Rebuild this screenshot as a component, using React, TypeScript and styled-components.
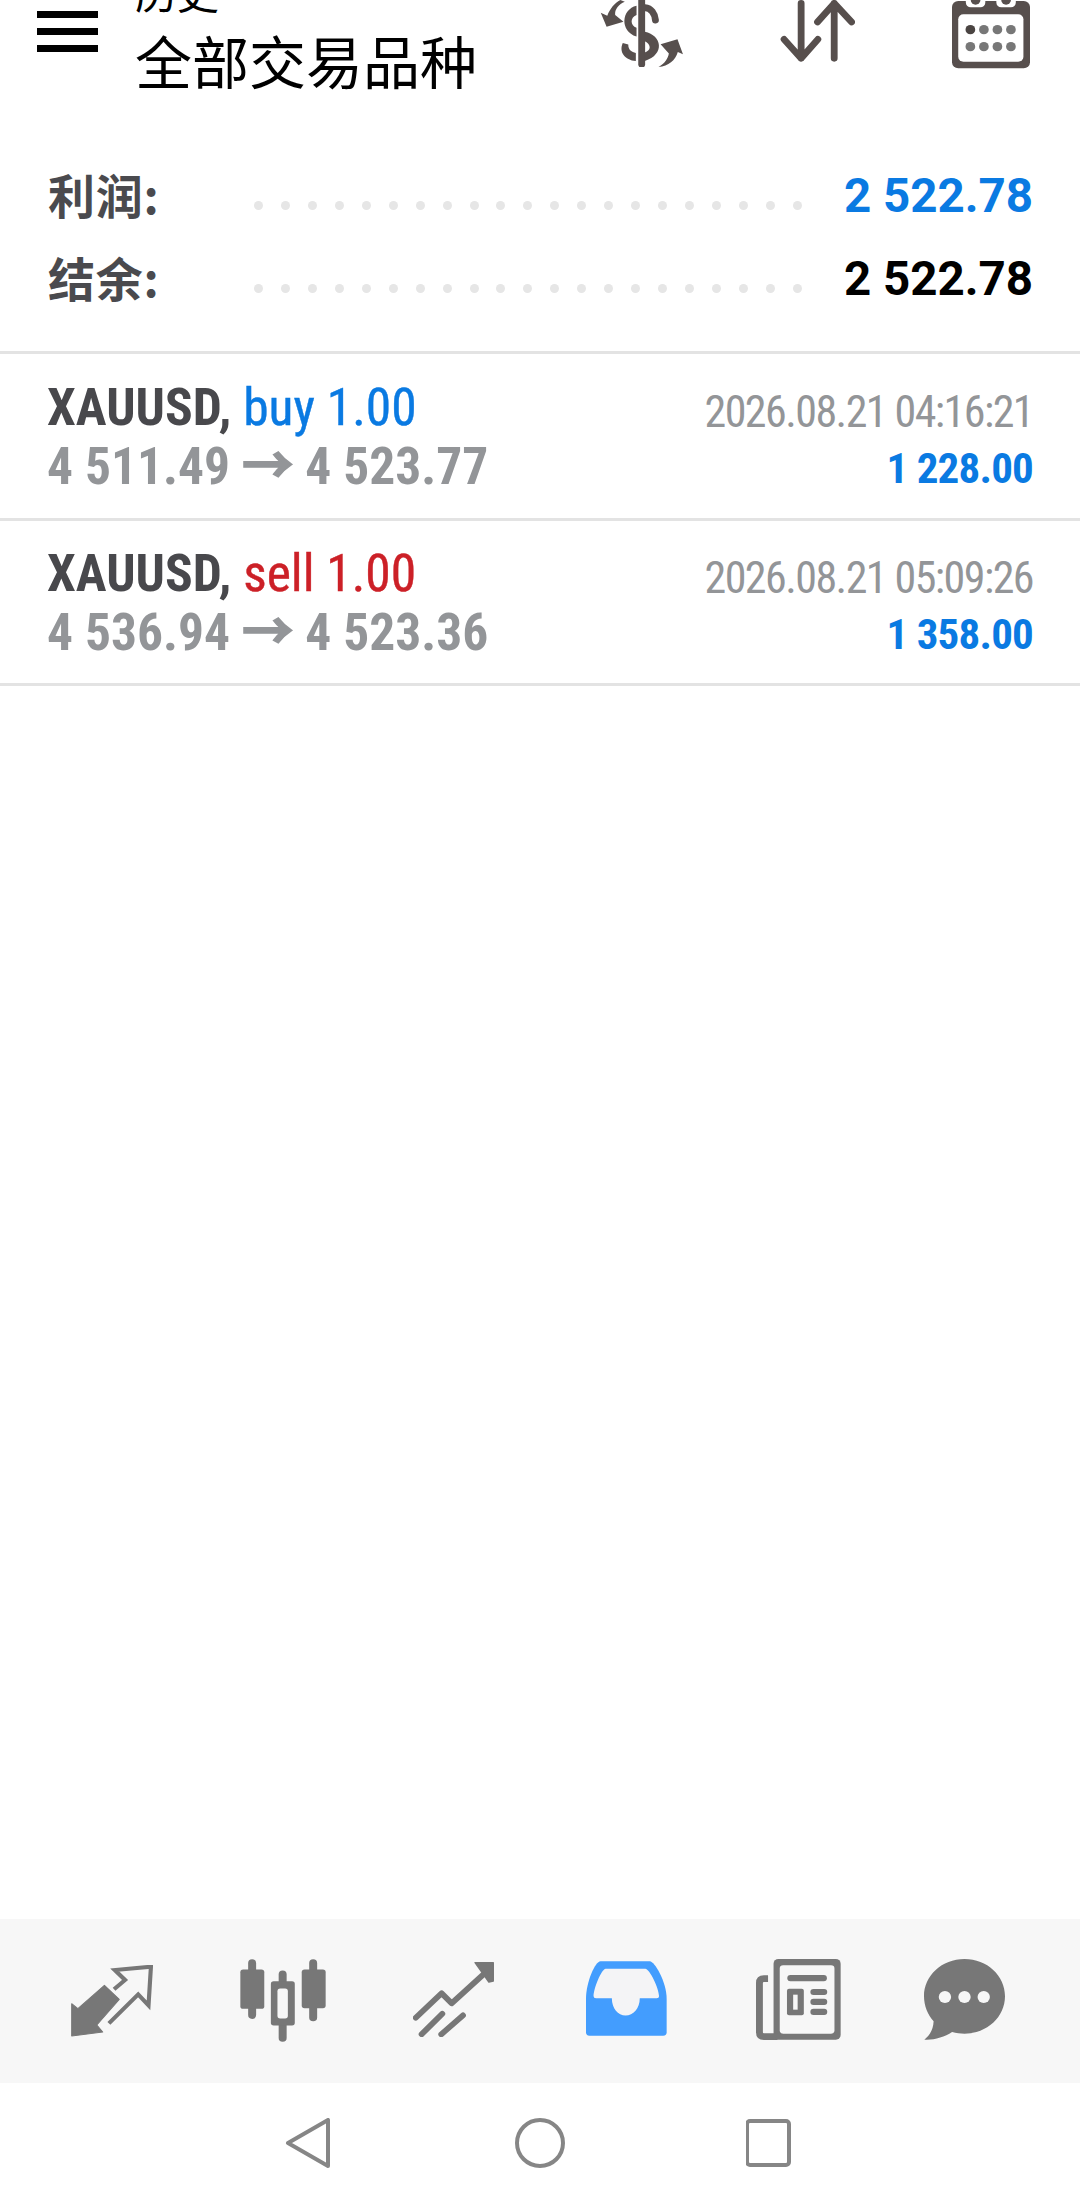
import styled, { createGlobalStyle } from 'styled-components'

const GlobalStyle = createGlobalStyle`
  html, body {
    margin: 0;
    padding: 0;
    background: #fff;
  }
`

const CONDENSED = `"Roboto Condensed", "Liberation Sans Narrow", Roboto, "Noto Sans CJK SC", sans-serif`

const Page = styled.div`
  width: 1080px;
  height: 2202px;
  display: flex;
  flex-direction: column;
  overflow: hidden;
  font-family: Roboto, "Noto Sans CJK SC", sans-serif;
`

const Header = styled.header`
  height: 120px;
  flex: none;
  display: flex;
  overflow: hidden;
  padding: 0 50px 0 37px;
  box-sizing: border-box;
`

const MenuButton = styled.div`
  width: 61px;
  height: 41px;
  margin-top: 11px;
  flex: none;
  border-top: 7px solid #000;
  border-bottom: 7px solid #000;
  box-sizing: border-box;
  display: flex;
  align-items: center;

  &::before {
    content: '';
    display: block;
    width: 100%;
    height: 7px;
    background: #000;
  }
`

const Titles = styled.div`
  margin: -38px 0 0 37px;
  flex: 1;
  font-family: "Noto Sans CJK SC", sans-serif;
  color: #000;
`

const Crumb = styled.div`
  font-size: 42px;
  line-height: 58px;
`

const Title = styled.div`
  font-size: 57px;
  line-height: 66px;
  margin-top: 6px;
`

const HeaderIcon = styled.svg<{ $w: number; $h: number; $ml: number }>`
  flex: none;
  display: block;
  width: ${p => p.$w}px;
  height: ${p => p.$h}px;
  margin-left: ${p => p.$ml}px;
`

const Summary = styled.section`
  height: 231px;
  flex: none;
  box-sizing: border-box;
  padding: 32px 47px 0 48px;
`

const SummaryRow = styled.div`
  height: 83px;
  display: flex;
  align-items: center;
`

const SummaryLabel = styled.div`
  width: 206px;
  flex: none;
  font-family: "Noto Sans CJK SC", sans-serif;
  font-weight: 700;
  font-size: 47px;
  letter-spacing: 0.8px;
  color: #4a4a4e;
`

const Dots = styled.div`
  width: 548px;
  flex: none;
  height: 9px;
  margin-top: 23px;
  display: flex;
  justify-content: space-between;
`

const Dot = styled.span`
  width: 9px;
  height: 9px;
  border-radius: 50%;
  background: #e6e6e6;
`

const SummaryValue = styled.div<{ $color: string }>`
  flex: 1;
  padding-top: 5px;
  text-align: right;
  font-weight: 700;
  font-size: 47.5px;
  color: ${p => p.$color};
`

const Deals = styled.section`
  flex: 1;
`

const Deal = styled.article`
  height: 167px;
  box-sizing: border-box;
  border-top: 3px solid #e3e3e3;
  padding: 24px 47px 0 47px;
  display: flex;
  justify-content: space-between;
  font-family: ${CONDENSED};
  &:last-child {
    border-bottom: 3px solid #e3e3e3;
    height: 168px;
    padding-top: 23px;
  }
`

const DealColumn = styled.div<{ $right?: boolean }>`
  display: flex;
  flex-direction: column;
  align-items: ${p => (p.$right ? 'flex-end' : 'flex-start')};
  padding-top: ${p => (p.$right ? 5 : 0)}px;
`

const Line = styled.div`
  font-size: 51.5px;
  line-height: 59px;
  white-space: nowrap;
`

const Symbol = styled.span`
  font-weight: 700;
  color: #48484c;
`

const Side = styled.span<{ $color: string }>`
  color: ${p => p.$color};
  -webkit-text-stroke: 0.4px ${p => p.$color};
`

const Prices = styled.span`
  font-weight: 700;
  color: #939598;
`

const PriceArrow = styled.span`
  -webkit-text-stroke: 1.6px #939598;
`

const Time = styled.div`
  font-size: 44px;
  line-height: 59px;
  letter-spacing: -1.55px;
  color: #939598;
  white-space: nowrap;
`

const Amount = styled.div`
  font-size: 43px;
  line-height: 59px;
  margin-top: -3px;
  letter-spacing: -0.8px;
  font-weight: 700;
  color: #0a7ae2;
  white-space: nowrap;
`

const TabBar = styled.nav`
  height: 164px;
  flex: none;
  background: #f7f7f7;
  display: flex;
  align-items: flex-start;
  padding: 40px 0 0 71px;
  box-sizing: border-box;
`

const TabIcon = styled.svg<{ $w: number; $h: number; $ml?: number; $mt?: number }>`
  display: block;
  flex: none;
  width: ${p => p.$w}px;
  height: ${p => p.$h}px;
  margin-left: ${p => p.$ml ?? 0}px;
  margin-top: ${p => p.$mt ?? 0}px;
`

const SystemBar = styled.div`
  height: 119px;
  flex: none;
  display: flex;
  align-items: center;
  justify-content: center;
  gap: 181px;
`

const SystemIcon = styled.svg`
  display: block;
  width: 50px;
  height: 50px;
`

const BROWN = '#574f4d'
const TAB = '#777777'
const BLUE = '#0a7ae2'

const DollarIcon = () => (
  <HeaderIcon $w={86} $h={67} $ml={0} viewBox="170 -5 250 200" preserveAspectRatio="none">
    <path d="M297 -5V187" stroke={BROWN} strokeWidth="20" strokeLinecap="round" fill="none" />
    <path d="M282 12C238 22 232 88 282 104V78C264 72 262 48 282 40Z" fill={BROWN} />
    <path d="M306 18C325 20 335 35 337 55" stroke={BROWN} strokeWidth="20" strokeLinecap="round" fill="none" />
    <path d="M306 90C356 100 366 158 306 177V152C325 145 325 128 306 118Z" fill={BROWN} />
    <path d="M280 177C248 174 230 150 242 123L258 128C258 145 268 150 280 153Z" fill={BROWN} />
    <path d="M248 0C228 8 218 25 220 40L244 60L195 75L178 33L197 42C205 20 218 5 235 -5Z" fill={BROWN} />
    <path d="M346 195C365 185 373 170 376 155L352 127L401 112L417 157L402 150C395 175 375 192 346 195Z" fill={BROWN} />
  </HeaderIcon>
)

const SortIcon = () => (
  <HeaderIcon $w={75} $h={62} $ml={96} viewBox="695 2 220 186" preserveAspectRatio="none">
    <g stroke={BROWN} strokeWidth="20" strokeLinecap="round" strokeLinejoin="round" fill="none">
      <path d="M757 12V177M707 120L757 177L806 120" />
      <path d="M854 177V12M805 68L854 12L905 68" />
    </g>
  </HeaderIcon>
)

const CalendarIcon = () => (
  <HeaderIcon $w={78} $h={69} $ml={97} viewBox="1197 0 225 207" preserveAspectRatio="none">
    <rect x="1197" y="3" width="225" height="202" rx="18" fill={BROWN} />
    <rect x="1215" y="43" width="188" height="142" rx="15" fill="#fff" />
    <rect x="1237" y="-10" width="56" height="32" rx="14" fill="#fff" />
    <rect x="1325" y="-10" width="56" height="32" rx="14" fill="#fff" />
    <circle cx="1265" cy="0" r="14" fill={BROWN} />
    <circle cx="1353" cy="0" r="14" fill={BROWN} />
    <circle cx="1250" cy="89" r="14" fill="#4a4442" />
    {[1289, 1328, 1367].map(x => (
      <circle key={x} cx={x} cy="89" r="14" fill="#777" />
    ))}
    {[1250, 1289, 1328, 1367].map(x => (
      <circle key={x} cx={x} cy="140" r="14" fill="#777" />
    ))}
  </HeaderIcon>
)

const TradeIcon = () => (
  <TabIcon $w={82} $h={72} $mt={6} viewBox="208 167 238 216" preserveAspectRatio="none">
    <path d="M305 228L348 270L283 347L300 368L210 380V283L228 298Z" fill={TAB} stroke={TAB} strokeWidth="3" strokeLinejoin="round" />
    <path d="M333 240L365 212L335 182L440 172L433 288L403 255L318 342" fill="none" stroke={TAB} strokeWidth="12" />
  </TabIcon>
)

const CandlesIcon = () => (
  <TabIcon $w={86} $h={83} $ml={87} viewBox="698 148 248 250" preserveAspectRatio="none">
    <g stroke={TAB} strokeWidth="23" strokeLinecap="round">
      <path d="M733 160V317M821 194V386M909 160V324" />
    </g>
    <rect x="699" y="180" width="69" height="118" rx="8" fill={TAB} />
    <rect x="787" y="215" width="69" height="133" rx="8" fill={TAB} />
    <rect x="876" y="180" width="69" height="116" rx="8" fill={TAB} />
    <rect x="806" y="237" width="30" height="90" rx="8" fill="#f7f7f7" />
  </TabIcon>
)

const TrendIcon = () => (
  <TabIcon $w={81} $h={76} $ml={87} $mt={2} viewBox="1200 155 235 228" preserveAspectRatio="none">
    <g stroke={TAB} strokeWidth="17" strokeLinecap="round" strokeLinejoin="round" fill="none">
      <path d="M1208 325L1283 252L1312 282L1410 190" />
      <path d="M1225 375L1285 313M1282 375L1345 318" />
    </g>
    <path d="M1380 160H1433V215L1420 218Z" fill={TAB} stroke={TAB} strokeWidth="4" strokeLinejoin="round" />
  </TabIcon>
)

const InboxIcon = () => (
  <TabIcon $w={81} $h={75} $ml={92} $mt={2} viewBox="133 157 235 224" preserveAspectRatio="none">
    <path
      d="M175 158H318C332 158 367 220 367 270V370Q367 380 357 380H143Q133 380 133 370V270C133 220 160 158 175 158Z"
      fill="#439dfe"
    />
    <path
      d="M190 180H305C318 180 345 240 345 262Q345 268 338 268H289C289 298 270 320 248 320C226 320 208 298 208 268H162Q155 268 155 262C155 240 178 180 190 180Z"
      fill="#f4f4f6"
    />
  </TabIcon>
)

const NewsIcon = () => (
  <TabIcon $w={85} $h={81} $ml={89} viewBox="627 148 247 243" preserveAspectRatio="none">
    <rect x="678" y="148" width="195" height="242" rx="14" fill={TAB} />
    <rect x="696" y="167" width="159" height="205" rx="10" fill="#f7f7f7" />
    <path d="M662 207H650Q637 207 637 220V368Q637 381 650 381H690" fill="none" stroke={TAB} strokeWidth="20" />
    <rect x="718" y="196" width="115" height="19" rx="9" fill={TAB} />
    <rect x="717" y="237" width="49" height="80" rx="6" fill={TAB} />
    <rect x="735" y="255" width="13" height="45" fill="#f7f7f7" />
    <rect x="785" y="238" width="49" height="18" rx="9" fill={TAB} />
    <rect x="785" y="267" width="49" height="19" rx="9" fill={TAB} />
    <rect x="785" y="297" width="49" height="19" rx="9" fill={TAB} />
  </TabIcon>
)

const ChatIcon = () => (
  <TabIcon $w={81} $h={81} $ml={83} viewBox="1116 148 236 243" preserveAspectRatio="none">
    <path
      d="M1234 148C1300 148 1352 198 1352 260C1352 322 1300 372 1234 372C1222 372 1210 370 1198 367C1175 382 1145 392 1117 390C1135 375 1143 358 1144 335C1127 315 1116 289 1116 260C1116 198 1168 148 1234 148Z"
      fill={TAB}
    />
    <circle cx="1177" cy="262" r="18" fill="#f7f7f7" />
    <circle cx="1234" cy="262" r="18" fill="#f7f7f7" />
    <circle cx="1290" cy="262" r="18" fill="#f7f7f7" />
  </TabIcon>
)

const summary = [
  { label: '利润:', value: '2 522.78', color: BLUE },
  { label: '结余:', value: '2 522.78', color: '#000' },
]

const deals = [
  {
    side: 'buy 1.00',
    color: BLUE,
    open: '4 511.49',
    close: '4 523.77',
    time: '2026.08.21 04:16:21',
    amount: '1 228.00',
  },
  {
    side: 'sell 1.00',
    color: '#cc2027',
    open: '4 536.94',
    close: '4 523.36',
    time: '2026.08.21 05:09:26',
    amount: '1 358.00',
  },
]

const App = () => (
  <Page>
    <GlobalStyle />
    <Header>
      <MenuButton />
      <Titles>
        <Crumb>历史</Crumb>
        <Title>全部交易品种</Title>
      </Titles>
      <DollarIcon />
      <SortIcon />
      <CalendarIcon />
    </Header>
    <Summary>
      {summary.map(row => (
        <SummaryRow key={row.label}>
          <SummaryLabel>{row.label}</SummaryLabel>
          <Dots>
            {Array.from({ length: 21 }, (_, i) => (
              <Dot key={i} />
            ))}
          </Dots>
          <SummaryValue $color={row.color}>{row.value}</SummaryValue>
        </SummaryRow>
      ))}
    </Summary>
    <Deals>
      {deals.map(deal => (
        <Deal key={deal.time}>
          <DealColumn>
            <Line>
              <Symbol>XAUUSD,</Symbol> <Side $color={deal.color}>{deal.side}</Side>
            </Line>
            <Line>
              <Prices>
                {deal.open} <PriceArrow>→</PriceArrow> {deal.close}
              </Prices>
            </Line>
          </DealColumn>
          <DealColumn $right>
            <Time>{deal.time}</Time>
            <Amount>{deal.amount}</Amount>
          </DealColumn>
        </Deal>
      ))}
    </Deals>
    <TabBar>
      <TradeIcon />
      <CandlesIcon />
      <TrendIcon />
      <InboxIcon />
      <NewsIcon />
      <ChatIcon />
    </TabBar>
    <SystemBar>
      <SystemIcon viewBox="0 0 50 50">
        <path d="M4 25L44 2V48Z" fill="none" stroke="#868686" strokeWidth="4" strokeLinejoin="round" />
      </SystemIcon>
      <SystemIcon viewBox="0 0 50 50">
        <circle cx="25" cy="25" r="23" fill="none" stroke="#868686" strokeWidth="4" />
      </SystemIcon>
      <SystemIcon viewBox="0 0 50 50">
        <rect x="1" y="3" width="42" height="44" rx="3" fill="none" stroke="#868686" strokeWidth="4" />
      </SystemIcon>
    </SystemBar>
  </Page>
)

export default App
